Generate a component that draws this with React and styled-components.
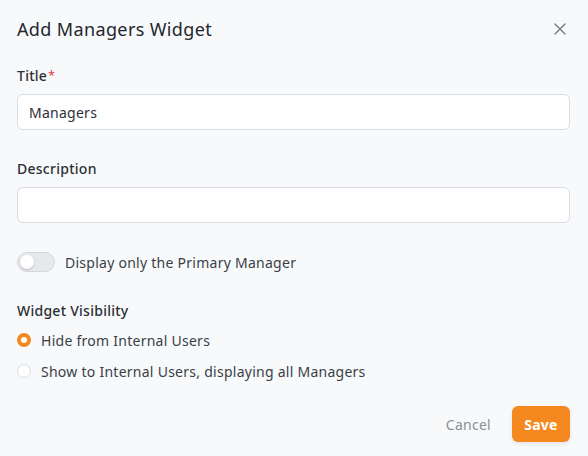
import React, { useState } from 'react';
import styled, { createGlobalStyle } from 'styled-components';

const GlobalStyle = createGlobalStyle`
  body {
    margin: 0;
    background: #f8f9fb;
    font-family: "Noto Sans", "Open Sans", sans-serif;
    color: #2b2f36;
    letter-spacing: 0.26px;
  }
`;

const Modal = styled.div`
  width: 588px;
  height: 456px;
  box-sizing: border-box;
  padding: 0 18px 0 17px;
  display: flex;
  flex-direction: column;
`;

const Header = styled.div`
  height: 58px;
  display: flex;
  align-items: center;
  justify-content: space-between;
`;

const Heading = styled.h2`
  margin: 0;
  font-size: 18px;
  font-weight: 400;
  letter-spacing: 0.37px;
  color: #23272e;
`;

const CloseButton = styled.button`
  border: none;
  background: none;
  padding: 0;
  margin-right: 4px;
  display: flex;
  cursor: pointer;
`;

const Field = styled.div`
  display: flex;
  flex-direction: column;
  margin-top: ${(p) => p.$top}px;
`;

const Label = styled.label`
  font-size: 14px;
  font-weight: 500;
  color: #2b2f36;
  margin-bottom: 9px;
  line-height: 18px;
`;

const Required = styled.span`
  color: #e5484d;
  font-size: 12px;
  vertical-align: top;
  margin-left: 1px;
`;

const Input = styled.input`
  height: 36px;
  box-sizing: border-box;
  border: 1px solid #d6dbe2;
  border-radius: 6px;
  background: #fff;
  padding: 0 11px;
  font-family: inherit;
  font-size: 14px;
  letter-spacing: inherit;
  color: #2b2f36;
  outline: none;
`;

const ToggleRow = styled.label`
  display: flex;
  align-items: center;
  gap: 10px;
  margin-top: 29px;
  font-size: 14px;
  color: #3a3f47;
  cursor: pointer;
`;

const Track = styled.span`
  width: 38px;
  height: 20px;
  border-radius: 10px;
  box-sizing: border-box;
  border: 1px solid #d3d7dd;
  background: ${(p) => (p.$on ? '#f5891f' : '#e6e8ec')};
  position: relative;
`;

const Knob = styled.span`
  position: absolute;
  top: 2px;
  left: ${(p) => (p.$on ? '20px' : '2px')};
  width: 14px;
  height: 14px;
  border-radius: 50%;
  background: #fff;
  box-shadow: 0 1px 2px rgba(0, 0, 0, 0.2);
`;

const Section = styled.div`
  margin-top: 30px;
  display: flex;
  flex-direction: column;
`;

const SectionTitle = styled.div`
  font-size: 14px;
  font-weight: 500;
  line-height: 18px;
  color: #2b2f36;
  margin-bottom: 10px;
`;

const RadioRow = styled.label`
  display: flex;
  align-items: center;
  gap: 10px;
  height: 20px;
  margin-bottom: 11px;
  font-size: 14px;
  color: #3a3f47;
  cursor: pointer;
`;

const RadioDot = styled.span`
  width: 14px;
  height: 14px;
  box-sizing: border-box;
  border-radius: 50%;
  background: #fff;
  border: ${(p) => (p.$checked ? '4px solid #f5891f' : '1px solid #d6dbe2')};
`;

const Footer = styled.div`
  margin-top: auto;
  height: 50px;
  margin-bottom: 7px;
  display: flex;
  align-items: center;
  justify-content: flex-end;
  gap: 21px;
`;

const CancelButton = styled.button`
  border: none;
  background: none;
  font-family: inherit;
  font-size: 14px;
  letter-spacing: inherit;
  color: #8a8f97;
  cursor: pointer;
  padding: 0;
`;

const SaveButton = styled.button`
  width: 58px;
  height: 36px;
  border: none;
  border-radius: 6px;
  background: #f5891f;
  color: #fff;
  font-family: inherit;
  font-size: 14px;
  font-weight: 700;
  letter-spacing: inherit;
  box-shadow: 0 2px 4px rgba(0, 0, 0, 0.08);
  cursor: pointer;
`;

const options = [
  'Hide from Internal Users',
  'Show to Internal Users, displaying all Managers',
];

export default function App() {
  const [primaryOnly, setPrimaryOnly] = useState(false);
  const [visibility, setVisibility] = useState(0);

  return (
    <>
      <GlobalStyle />
      <Modal>
        <Header>
          <Heading>Add Managers Widget</Heading>
          <CloseButton aria-label="Close">
            <svg width="12" height="12" viewBox="0 0 12 12">
              <path d="M1 1L11 11M11 1L1 11" stroke="#7c8088" strokeWidth="1.5" strokeLinecap="round" />
            </svg>
          </CloseButton>
        </Header>

        <Field $top={9}>
          <Label>
            Title<Required>*</Required>
          </Label>
          <Input defaultValue="Managers" />
        </Field>

        <Field $top={30}>
          <Label>Description</Label>
          <Input />
        </Field>

        <ToggleRow onClick={() => setPrimaryOnly(!primaryOnly)}>
          <Track $on={primaryOnly}>
            <Knob $on={primaryOnly} />
          </Track>
          Display only the Primary Manager
        </ToggleRow>

        <Section>
          <SectionTitle>Widget Visibility</SectionTitle>
          {options.map((opt, i) => (
            <RadioRow key={i} onClick={() => setVisibility(i)}>
              <RadioDot $checked={visibility === i} />
              {opt}
            </RadioRow>
          ))}
        </Section>

        <Footer>
          <CancelButton>Cancel</CancelButton>
          <SaveButton>Save</SaveButton>
        </Footer>
      </Modal>
    </>
  );
}
